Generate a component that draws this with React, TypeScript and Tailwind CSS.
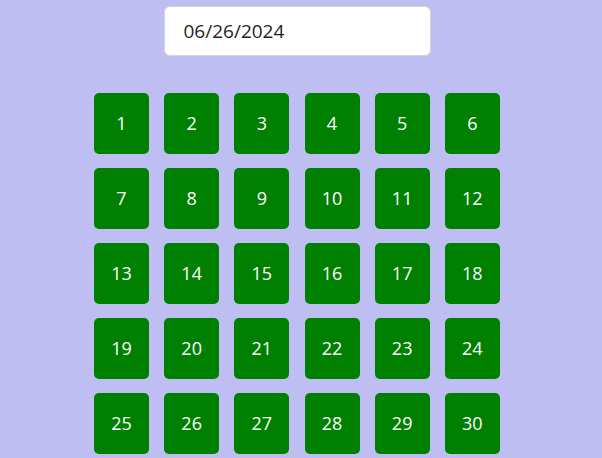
export default function App() {
    const days = Array.from({ length: 30 }, (_, i) => i + 1);

    return (
        <div className="min-h-screen w-full bg-[#bfbef2] pt-[6px] font-['Open_Sans',sans-serif]">
            <div className="ml-[94px] w-[406px]">
                <input
                    type="text"
                    readOnly
                    value="06/26/2024"
                    className="mx-auto block h-[50px] w-[267px] rounded-md border border-[#d4d4dc] bg-white pl-[19px] text-[19px] text-[#1f1f1f] outline-none"
                />
                <div className="mt-[37px] grid grid-cols-6 gap-x-[15px] gap-y-[14px]">
                    {days.map(d => (
                        <div
                            key={d}
                            className="flex h-[61px] w-[55px] items-center justify-center rounded-[5px] bg-[#008000] text-[18px] text-white"
                        >
                            {d}
                        </div>
                    ))}
                </div>
            </div>
        </div>
    );
}
